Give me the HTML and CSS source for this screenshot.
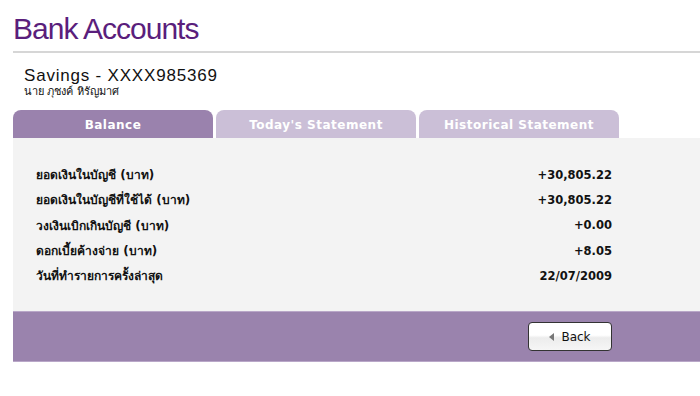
FILE: index.html
```html
<!DOCTYPE html>
<html lang="th">
<head>
  <meta charset="UTF-8" />
  <title>Bank Accounts</title>
  <link rel="stylesheet" href="styles.css">
</head>
<body>
  <h1 class="page-title">Bank Accounts</h1>

  <div class="account">
    <div class="account-name">Savings - XXXX985369</div>
    <div class="account-owner">นาย ภุชงค์ หิรัญมาศ</div>
  </div>

  <div class="tabs">
    <a href="#" class="tab active">Balance</a>
    <a href="#" class="tab">Today's Statement</a>
    <a href="#" class="tab">Historical Statement</a>
  </div>

  <div class="panel">
    <div class="row"><span class="label">ยอดเงินในบัญชี (บาท)</span><span class="value">+30,805.22</span></div>
    <div class="row"><span class="label">ยอดเงินในบัญชีที่ใช้ได้ (บาท)</span><span class="value">+30,805.22</span></div>
    <div class="row"><span class="label">วงเงินเบิกเกินบัญชี (บาท)</span><span class="value">+0.00</span></div>
    <div class="row"><span class="label">ดอกเบี้ยค้างจ่าย (บาท)</span><span class="value">+8.05</span></div>
    <div class="row"><span class="label">วันที่ทำรายการครั้งล่าสุด</span><span class="value">22/07/2009</span></div>
  </div>

  <div class="footer-bar">
    <button class="back-btn"><span class="arrow"></span>Back</button>
  </div>
</body>
</html>
```

FILE: styles.css
```css
body {
  margin: 0;
  padding: 0;
  background: #fff;
  font-family: 'DejaVu Sans', sans-serif;
  color: #111;
}
.page-title {
  margin: 0 0 0 13px;
  padding-top: 12px;
  height: 39px;
  font-family: 'Liberation Sans', Arial, sans-serif;
  font-weight: normal;
  font-size: 30px;
  line-height: 34px;
  letter-spacing: -1px;
  color: #5a1e7c;
  border-bottom: 2px solid #d6d6d6;
}
.account {
  padding: 13px 0 0 24px;
  height: 44px;
}
.account-name {
  font-family: 'Liberation Sans', Arial, sans-serif;
  font-size: 17px;
  letter-spacing: 0.8px;
  line-height: 19px;
}
.account-owner {
  font-size: 11px;
  line-height: 13px;
}
.tabs {
  display: flex;
  gap: 3px;
  margin-left: 13px;
  height: 28px;
}
.tab {
  width: 200px;
  display: flex;
  align-items: center;
  justify-content: center;
  background: #cbbfd7;
  color: #fff;
  text-decoration: none;
  font-weight: bold;
  font-size: 12px;
  letter-spacing: 0.5px;
  border-radius: 8px 8px 0 0;
  padding-top: 2px;
  box-sizing: border-box;
}
.tab.active {
  background: #9a82ad;
}
.panel {
  margin-left: 13px;
  background: #f3f3f3;
  padding: 24px 88px 22px 23px;
  height: 127px;
}
.row {
  display: flex;
  justify-content: space-between;
  align-items: center;
  height: 25.3px;
  font-weight: bold;
  font-size: 12px;
}
.value {
  font-size: 11.5px;
}
.footer-bar {
  margin-left: 13px;
  height: 49px;
  background: #9a83ad;
  border-top: 1px solid #b9a7c8;
  border-bottom: 1px solid #b9a7c8;
  display: flex;
  align-items: center;
  justify-content: flex-end;
  padding-right: 88px;
}
.back-btn {
  width: 84px;
  height: 29px;
  border: 1px solid #333;
  border-radius: 4px;
  background: linear-gradient(#fff 0%, #fff 45%, #ececec 55%, #f6f6f6 100%);
  font-family: 'DejaVu Sans', sans-serif;
  font-size: 12px;
  color: #111;
  display: flex;
  align-items: center;
  justify-content: center;
  gap: 7px;
  padding: 0;
  cursor: pointer;
}
.arrow {
  width: 0;
  height: 0;
  border-top: 4px solid transparent;
  border-bottom: 4px solid transparent;
  border-right: 5px solid #777;
}
```
